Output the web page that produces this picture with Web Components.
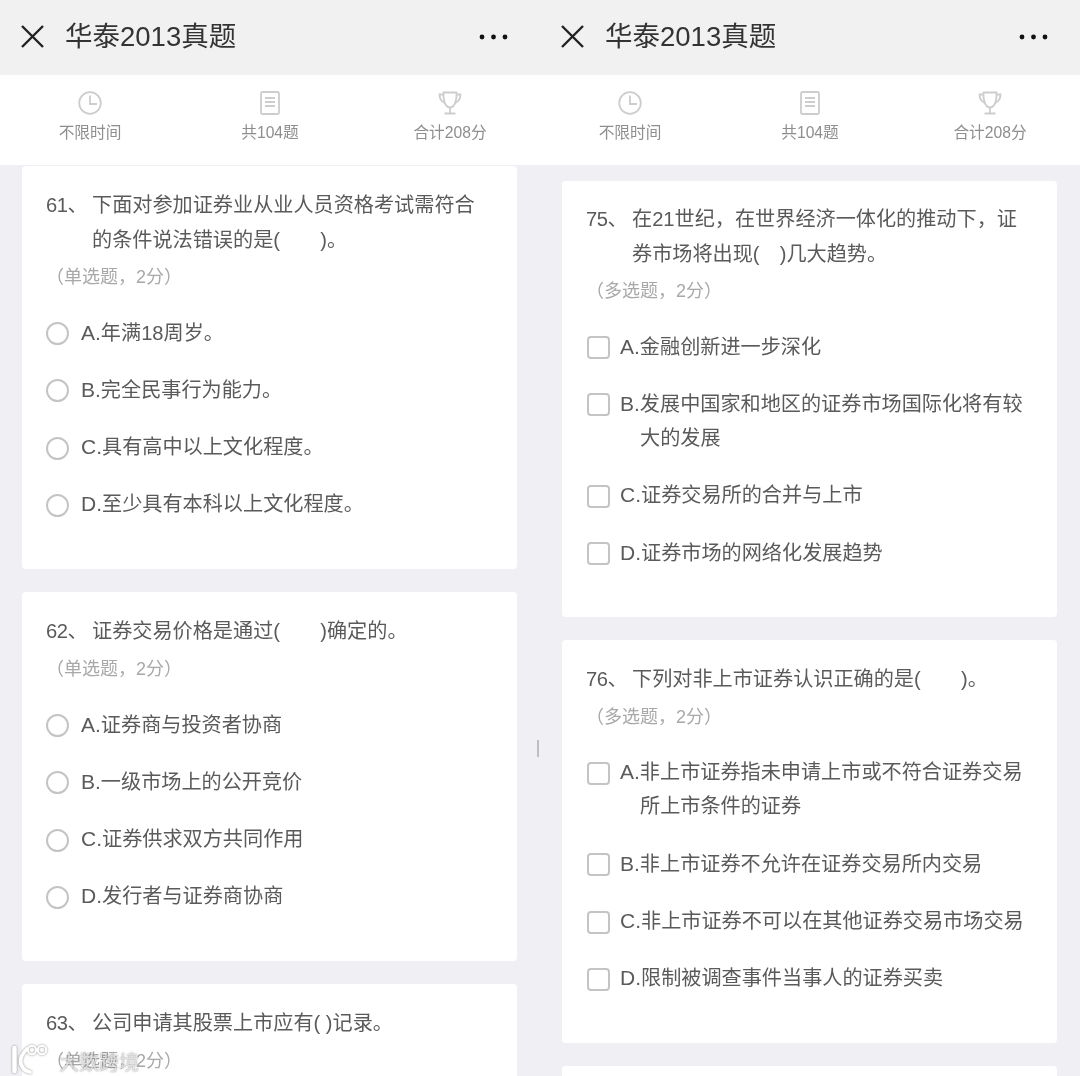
<!DOCTYPE html>
<html lang="zh">
<head>
<meta charset="utf-8">
<title>华泰2013真题</title>
<style>
  html, body { margin: 0; padding: 0; background: #efeff4; }
  body { font-family: "Liberation Sans", "Noto Sans CJK SC", sans-serif; }
</style>
</head>
<body>
<exam-page>
  <exam-pane>
    <question-card num="61" meta="（单选题，2分）" text="下面对参加证券业从业人员资格考试需符合的条件说法错误的是(　　)。" style="margin-top:1px">
      <answer-option label="A." kind="radio">年满18周岁。</answer-option>
      <answer-option label="B." kind="radio">完全民事行为能力。</answer-option>
      <answer-option label="C." kind="radio">具有高中以上文化程度。</answer-option>
      <answer-option label="D." kind="radio">至少具有本科以上文化程度。</answer-option>
    </question-card>
    <question-card num="62" meta="（单选题，2分）" text="证券交易价格是通过(　　)确定的。">
      <answer-option label="A." kind="radio">证券商与投资者协商</answer-option>
      <answer-option label="B." kind="radio">一级市场上的公开竞价</answer-option>
      <answer-option label="C." kind="radio">证券供求双方共同作用</answer-option>
      <answer-option label="D." kind="radio">发行者与证券商协商</answer-option>
    </question-card>
    <question-card num="63" meta="（单选题，2分）" text="公司申请其股票上市应有( )记录。"></question-card>
  </exam-pane>
  <exam-pane>
    <question-card num="75" meta="（多选题，2分）" text="在21世纪，在世界经济一体化的推动下，证券市场将出现(　)几大趋势。" style="margin-top:16px;padding-top:21px;padding-bottom:24px">
      <answer-option label="A." kind="check">金融创新进一步深化</answer-option>
      <answer-option label="B." kind="check">发展中国家和地区的证券市场国际化将有较大的发展</answer-option>
      <answer-option label="C." kind="check">证券交易所的合并与上市</answer-option>
      <answer-option label="D." kind="check">证券市场的网络化发展趋势</answer-option>
    </question-card>
    <question-card num="76" meta="（多选题，2分）" text="下列对非上市证券认识正确的是(　　)。">
      <answer-option label="A." kind="check">非上市证券指未申请上市或不符合证券交易所上市条件的证券</answer-option>
      <answer-option label="B." kind="check">非上市证券不允许在证券交易所内交易</answer-option>
      <answer-option label="C." kind="check">非上市证券不可以在其他证券交易市场交易</answer-option>
      <answer-option label="D." kind="check">限制被调查事件当事人的证券买卖</answer-option>
    </question-card>
    <question-card></question-card>
  </exam-pane>
</exam-page>
<script>
// page shell: two phone panes side by side, with the overlays on top
class ExamPage extends HTMLElement {
  connectedCallback() {
    const root = this.attachShadow({ mode: 'open' });
    root.innerHTML = `
<style>
  :host { display: flex; width: 1080px; height: 1076px; position: relative; overflow: hidden; background: #efeff4; filter: blur(0.5px); }
  .divider { position: absolute; left: 537px; top: 740px; width: 2px; height: 17px; background: #bdbdc2; }
  .mark { position: absolute; left: 9px; top: 1041px; display: flex; align-items: center; gap: 10px; }
  .mark svg { width: 40px; height: 32px; filter: drop-shadow(0 0 1px rgba(130,130,130,.9)); }
  .mark span { font-size: 20px; color: rgba(255,255,255,.7); text-shadow: 0 0 1.5px rgba(90,90,90,.8); margin-top: 6px; }
</style>
<slot></slot>
<div class="divider"></div>
<div class="mark">
  <svg viewBox="0 0 40 32" fill="none" stroke="#fff" stroke-linecap="round">
    <path d="M5.500 5V28" stroke-width="4.500"/>
    <path d="M18 6C14 10 11.500 14 11.500 18C11.500 23 15 28 21 29" stroke-width="3.800"/>
    <circle cx="23" cy="7" r="4.200" stroke-width="2"/>
    <circle cx="33" cy="7" r="4.200" stroke-width="2"/>
  </svg>
  <span>大数跨境</span>
</div>`;
  }
}

class ExamPane extends HTMLElement {
  connectedCallback() {
    const root = this.attachShadow({ mode: 'open' });
    root.innerHTML = `
<style>
  :host { display: flex; flex-direction: column; width: 540px; height: 1076px; overflow: hidden; }
  .list { display: flex; flex-direction: column; gap: 23px; padding: 0 23px 0 22px; }
</style>
<exam-header></exam-header>
<exam-stats></exam-stats>
<div class="list"><slot></slot></div>`;
  }
}

class ExamHeader extends HTMLElement {
  connectedCallback() {
    const root = this.attachShadow({ mode: 'open' });
    root.innerHTML = `
<style>
  :host { display: flex; align-items: center; height: 75px; flex: none; background: #f1f1f2; color: #333; padding: 0 31px 2px 21px; box-sizing: border-box; }
  .close { width: 23px; height: 23px; flex: none; }
  .title { flex: 1; margin-left: 21px; font-size: 27.500px; line-height: 36px; }
  .more { width: 30px; height: 8px; flex: none; }
</style>
<svg class="close" viewBox="0 0 23 23" fill="none" stroke="#222" stroke-width="2.4"><path d="M1 1l21 21M22 1L1 22"/></svg>
<div class="title">华泰2013真题</div>
<svg class="more" viewBox="0 0 30 8" fill="#111"><circle cx="3" cy="4" r="2.400"/><circle cx="14.500" cy="4" r="2.400"/><circle cx="26" cy="4" r="2.400"/></svg>`;
  }
}

const ICONS = {
  clock: '<circle cx="12" cy="12" r="10.800"/><path d="M12 4.500V13H19"/>',
  doc: '<rect x="3" y="1" width="18" height="22" rx="1.500"/><path d="M7 7H17M7 11H17M7 15H17"/>',
  cup: '<path d="M5.500 1.500H18.500C19 9 17 16 12 16.500C7 16 5 9 5.500 1.500Z"/><path d="M5.500 3.500H1.500C1.500 7.500 3 10.500 7 12M18.500 3.500H22.500C22.500 7.500 21 10.500 17 12"/><path d="M12 16.500V22M6.500 22.500H17.500"/>'
};

class ExamStats extends HTMLElement {
  connectedCallback() {
    const root = this.attachShadow({ mode: 'open' });
    const items = [['clock', '不限时间'], ['doc', '共104题'], ['cup', '合计208分']];
    root.innerHTML = `
<style>
  :host { display: grid; grid-template-columns: repeat(3, 180px); height: 90px; flex: none; background: #fff; }
  .item { display: flex; flex-direction: column; align-items: center; padding-top: 16px; }
  svg { width: 24px; height: 24px; fill: none; stroke: #cdcdcd; stroke-width: 1.800; }
  span { font-size: 15.700px; line-height: 22px; margin-top: 7px; color: #8e8e8e; }
</style>
` + items.map(([icon, label]) => `<div class="item"><svg viewBox="0 0 24 24">${ICONS[icon]}</svg><span>${label}</span></div>`).join('');
  }
}

class QuestionCard extends HTMLElement {
  connectedCallback() {
    const root = this.attachShadow({ mode: 'open' });
    const num = this.getAttribute('num');
    root.innerHTML = `
<style>
  :host { display: block; background: #fff; border-radius: 4px; padding: 22px 28px 24.700px 24px; color: #5a5a5a; font-size: 20.150px; line-height: 34.500px; }
  .q { display: grid; grid-template-columns: 46px 1fr; }
  .num { white-space: nowrap; letter-spacing: -0.5px; }
  .meta { margin-top: 3px; font-size: 18px; color: #a8a8a8; }
  .opts { display: flex; flex-direction: column; gap: 23px; margin: 21.100px 0 23px; }
</style>
${num ? `<div class="q"><span class="num">${num}、</span><span>${this.getAttribute('text')}</span></div>
<div class="meta">${this.getAttribute('meta')}</div>` : ''}
<div class="opts"><slot></slot></div>`;
  }
}

class AnswerOption extends HTMLElement {
  connectedCallback() {
    const root = this.attachShadow({ mode: 'open' });
    const isCheck = this.getAttribute('kind') === 'check';
    root.innerHTML = `
<style>
  :host { display: grid; grid-template-columns: ${isCheck ? '34px' : '35px'} 1fr; line-height: 34.300px; }
  .box { box-sizing: border-box; width: 23px; height: 23px; margin-top: 6.500px; background: #fff; border: 2px solid #c4c4c4; border-radius: ${isCheck ? '4px' : '50%'}; margin-left: ${isCheck ? '1px' : '0'}; }
  .text { padding-left: 20px; text-indent: -20px; }
  .label { font-size: 21px; }
</style>
<div class="box"></div>
<div class="text"><span class="label">${this.getAttribute('label')}</span><slot></slot></div>`;
  }
}

customElements.define('exam-header', ExamHeader);
customElements.define('exam-stats', ExamStats);
customElements.define('answer-option', AnswerOption);
customElements.define('question-card', QuestionCard);
customElements.define('exam-pane', ExamPane);
customElements.define('exam-page', ExamPage);
</script>
</body>
</html>
